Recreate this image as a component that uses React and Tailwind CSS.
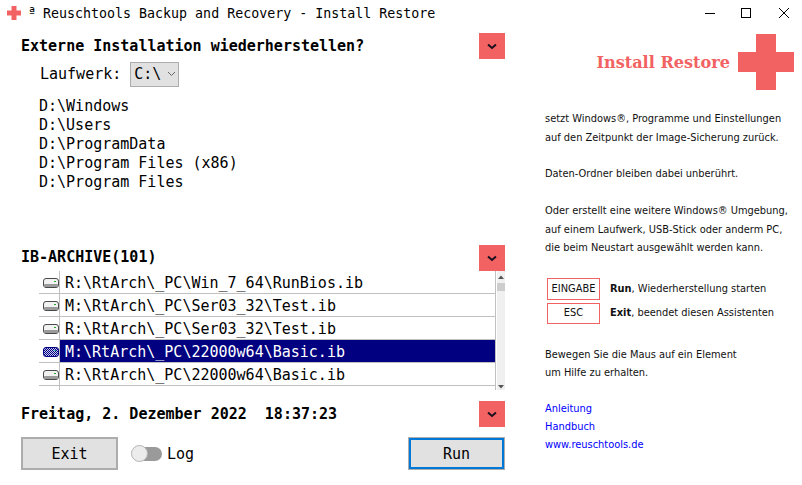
import React from 'react';

const mono = "font-['DejaVu_Sans_Mono',monospace]";

const Chevron = () => (
  <svg width="10" height="7" viewBox="0 0 10 7">
    <path d="M1 1.5 L5 5 L9 1.5" fill="none" stroke="#1a1020" strokeWidth="2" />
  </svg>
);

const RedButton = () => (
  <div className="w-[26px] h-[26px] bg-[#f26262] flex items-center justify-center">
    <Chevron />
  </div>
);

const Cross = ({ size }) => (
  <svg width={size} height={size} viewBox="0 0 56 56">
    <path d="M18 0 H38 V18 H56 V38 H38 V56 H18 V38 H0 V18 H18 Z" fill="#f26262" />
  </svg>
);

const DriveIcon = ({ selected }) => (
  <svg width="16" height="10" viewBox="0 0 16 10">
    <defs>
      <pattern id="dither" width="2" height="2" patternUnits="userSpaceOnUse">
        <rect width="2" height="2" fill="#c8c8f0" />
        <rect width="1" height="1" fill="#000080" />
        <rect x="1" y="1" width="1" height="1" fill="#000080" />
      </pattern>
    </defs>
    <rect x="0.5" y="0.5" width="15" height="9" rx="2.5" fill={selected ? 'url(#dither)' : '#f2f2f2'} stroke={selected ? '#000080' : '#4a4a4a'} />
    {!selected && <rect x="1" y="6" width="14" height="3" rx="1" fill="#9a9a9a" />}
    <rect x="11" y="3" width="2" height="1" fill={selected ? '#2a8' : '#2a2'} />
  </svg>
);

const rows = [
  { path: 'R:\\RtArch\\_PC\\Win_7_64\\RunBios.ib' },
  { path: 'M:\\RtArch\\_PC\\Ser03_32\\Test.ib' },
  { path: 'R:\\RtArch\\_PC\\Ser03_32\\Test.ib' },
  { path: 'M:\\RtArch\\_PC\\22000w64\\Basic.ib', selected: true },
  { path: 'R:\\RtArch\\_PC\\22000w64\\Basic.ib' },
];

const folders = ['D:\\Windows', 'D:\\Users', 'D:\\ProgramData', 'D:\\Program Files (x86)', 'D:\\Program Files'];

const Heading = ({ children, className = '' }) => (
  <div className={`text-[15px] font-bold text-black whitespace-pre ${mono} ${className}`}>{children}</div>
);

const App = () => {
  return (
    <div className="w-[802px] h-[485px] bg-white overflow-hidden flex flex-col text-black">
      {/* Title bar */}
      <div className="h-[26px] flex items-center pl-[7px] shrink-0">
        <Cross size={14} />
        <span className={`ml-[7px] text-[13.3px] ${mono}`}>ª</span>
        <span className={`ml-[7px] pt-[1px] text-[13.3px] whitespace-pre ${mono}`}>Reuschtools Backup and Recovery - Install Restore</span>
        <div className="ml-auto flex items-center">
          <svg width="10" height="10" viewBox="0 0 10 10" className="mr-[26px]"><path d="M0 5.5 H10" stroke="#000" /></svg>
          <svg width="10" height="10" viewBox="0 0 10 10" className="mr-[28px]"><rect x="0.5" y="0.5" width="9" height="9" fill="none" stroke="#000" /></svg>
          <svg width="10" height="10" viewBox="0 0 10 10" className="mr-[13px]"><path d="M0 0 L10 10 M10 0 L0 10" stroke="#000" /></svg>
        </div>
      </div>

      <div className="flex flex-1">
        {/* Left panel */}
        <div className="w-[505px] pl-[21px] flex flex-col">
          <div className="h-[26px] mt-[7px] flex items-center justify-between">
            <Heading>Externe Installation wiederherstellen?</Heading>
            <RedButton />
          </div>
          <div className={`flex items-center h-[24px] mt-[3px] ml-[19px] text-[15px] ${mono}`}>
            <span>Laufwerk:</span>
            <div className="ml-[9px] w-[49px] h-[25px] bg-[#e1e1e1] border border-[#adadad] flex items-center justify-between pl-[3px] pr-[2px]">
              <span>C:\</span>
              <svg width="9" height="6" viewBox="0 0 9 6"><path d="M1 1 L4.5 4.5 L8 1" fill="none" stroke="#666" /></svg>
            </div>
          </div>
          <div className={`mt-[11px] ml-[18px] text-[15px] leading-[19px] whitespace-pre ${mono}`}>
            {folders.map((f) => <div key={f}>{f}</div>)}
          </div>

          <div className="h-[26px] mt-[53px] flex items-center justify-between">
            <Heading className="pb-[2px]">IB-ARCHIVE(101)</Heading>
            <RedButton />
          </div>
          {/* Archive list */}
          <div className="h-[119px] ml-[18px] flex">
            <div className="flex-1 border-r border-[#c0c0c0] mr-[1px]">
              {rows.map((r) => (
                <div key={r.path + r.selected} className="h-[23px] flex border-b border-[#c0c0c0]">
                  <div className="w-[21px] flex items-center border-r border-[#c0c0c0] pl-[4px] pt-[2px] shrink-0">
                    <DriveIcon selected={r.selected} />
                  </div>
                  <div className={`flex-1 pl-[5px] pt-[2px] text-[15px] leading-[20px] whitespace-pre ${mono} ${r.selected ? 'bg-[#000080] text-white' : ''}`}>
                    {r.path}
                  </div>
                </div>
              ))}
              <div className="w-[21px] h-[4px] border-r border-[#c0c0c0]" />
            </div>
            <div className="w-[8px] bg-[#f0f0f0] flex flex-col items-center justify-between">
              <div className="w-full flex flex-col">
                <svg width="8" height="6" viewBox="0 0 8 6" className="mt-[3px]"><path d="M1 5 L4 1.5 L7 5 Z" fill="#555" /></svg>
                <div className="w-full h-[8px] bg-[#cdcdcd] mt-[3px]" />
              </div>
              <svg width="8" height="6" viewBox="0 0 8 6"><path d="M1 1 L4 4.5 L7 1 Z" fill="#555" /></svg>
            </div>
          </div>

          <div className="h-[26px] mt-[11px] flex items-center justify-between">
            <Heading>Freitag, 2. Dezember 2022  18:37:23</Heading>
            <RedButton />
          </div>
          <div className="mt-[10px] flex items-center">
            <button className={`w-[97px] h-[33px] pt-[1px] bg-[#e1e1e1] border-2 border-[#adadad] text-[15px] ${mono}`}>Exit</button>
            <div className="ml-[13px] w-[31px] h-[17px] relative flex items-center">
              <div className="absolute right-0 w-[24px] h-[14px] rounded-full bg-[#9a9a9a]" />
              <div className="absolute left-0 w-[17px] h-[17px] rounded-full bg-[#ececec] border border-[#b4b4b4]" />
            </div>
            <span className={`ml-[5px] pt-[2px] text-[15px] ${mono}`}>Log</span>
            <button className={`ml-auto mr-[1px] w-[95px] h-[31px] pt-[1px] bg-[#e1e1e1] border-2 border-[#0078d7] outline outline-1 outline-[#adadad] text-[15px] ${mono}`}>Run</button>
          </div>
        </div>

        {/* Right panel */}
        <div className="flex-1 pl-[40px] pr-[8px] flex flex-col font-['DejaVu_Sans',sans-serif] text-[9.85px] leading-[18.5px] text-[#111]">
          <div className="flex items-center justify-end h-[56px] mt-[8px]">
            <span className="font-['DejaVu_Serif',serif] font-bold text-[16.1px] text-[#f26262] mr-[8px] mt-[2px]">Install Restore</span>
            <Cross size={56} />
          </div>
          <p className="mt-[20px]">setzt Windows®, Programme und Einstellungen<br />auf den Zeitpunkt der Image-Sicherung zurück.</p>
          <p className="mt-[18px]">Daten-Ordner bleiben dabei unberührt.</p>
          <p className="mt-[18.5px]">Oder erstellt eine weitere Windows® Umgebung,<br />auf einem Laufwerk, USB-Stick oder anderm PC,<br />die beim Neustart ausgewählt werden kann.</p>

          <div className="mt-[20.5px] ml-[2px] flex items-center h-[22px]">
            <div className="w-[53px] h-[22px] border border-[#f26262] flex items-center justify-center shrink-0">EINGABE</div>
            <span className="ml-[10px]"><b>Run</b>, Wiederherstellung starten</span>
          </div>
          <div className="mt-[3px] ml-[2px] flex items-center h-[21px]">
            <div className="w-[53px] h-[21px] border border-[#f26262] flex items-center justify-center shrink-0">ESC</div>
            <span className="ml-[10px]"><b>Exit</b>, beendet diesen Assistenten</span>
          </div>

          <p className="mt-[22px] leading-[18px]">Bewegen Sie die Maus auf ein Element<br />um Hilfe zu erhalten.</p>
          <div className="mt-[18px] leading-[18px] text-[#0000ff]">
            <div>Anleitung</div>
            <div>Handbuch</div>
            <div>www.reuschtools.de</div>
          </div>
        </div>
      </div>
    </div>
  );
};

export default App;
